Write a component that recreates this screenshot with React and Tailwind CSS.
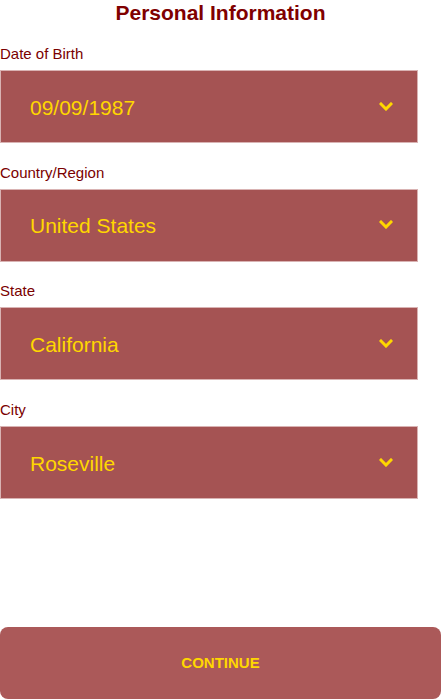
const fields = [
  { label: 'Date of Birth', value: '09/09/1987' },
  { label: 'Country/Region', value: 'United States' },
  { label: 'State', value: 'California' },
  { label: 'City', value: 'Roseville' },
]

function Chevron() {
  return (
    <svg width="14" height="9" viewBox="0 0 14 9" fill="none" className="-mt-[3px]">
      <polyline points="2,2 7,7 12,2" stroke="#ffd700" strokeWidth="3" strokeLinecap="square" />
    </svg>
  )
}

export default function App() {
  return (
    <div className="min-h-screen flex flex-col bg-white font-['Liberation_Sans',Arial,sans-serif]">
      <h1 className="text-center text-[21px] leading-[26px] font-bold text-[#800000]">Personal Information</h1>

      <div className="mt-[19px] flex flex-col gap-[20.7px]">
        {fields.map(f => (
          <div key={f.label}>
            <div className="text-[15px] leading-[17px] text-[#7a0000] mb-[8px]">{f.label}</div>
            <div className="w-[418px] h-[73px] bg-[#a55353] border border-[#d9b3b3] flex items-center justify-between pl-[29px] pr-6 pt-[2px]">
              <span className="text-[21px] text-[#ffd700]">{f.value}</span>
              <Chevron />
            </div>
          </div>
        ))}
      </div>

      <button className="mt-auto h-[72px] w-full rounded-lg bg-[#ab5959] text-[#ffd700] text-[15px] font-bold">
        CONTINUE
      </button>
    </div>
  )
}
